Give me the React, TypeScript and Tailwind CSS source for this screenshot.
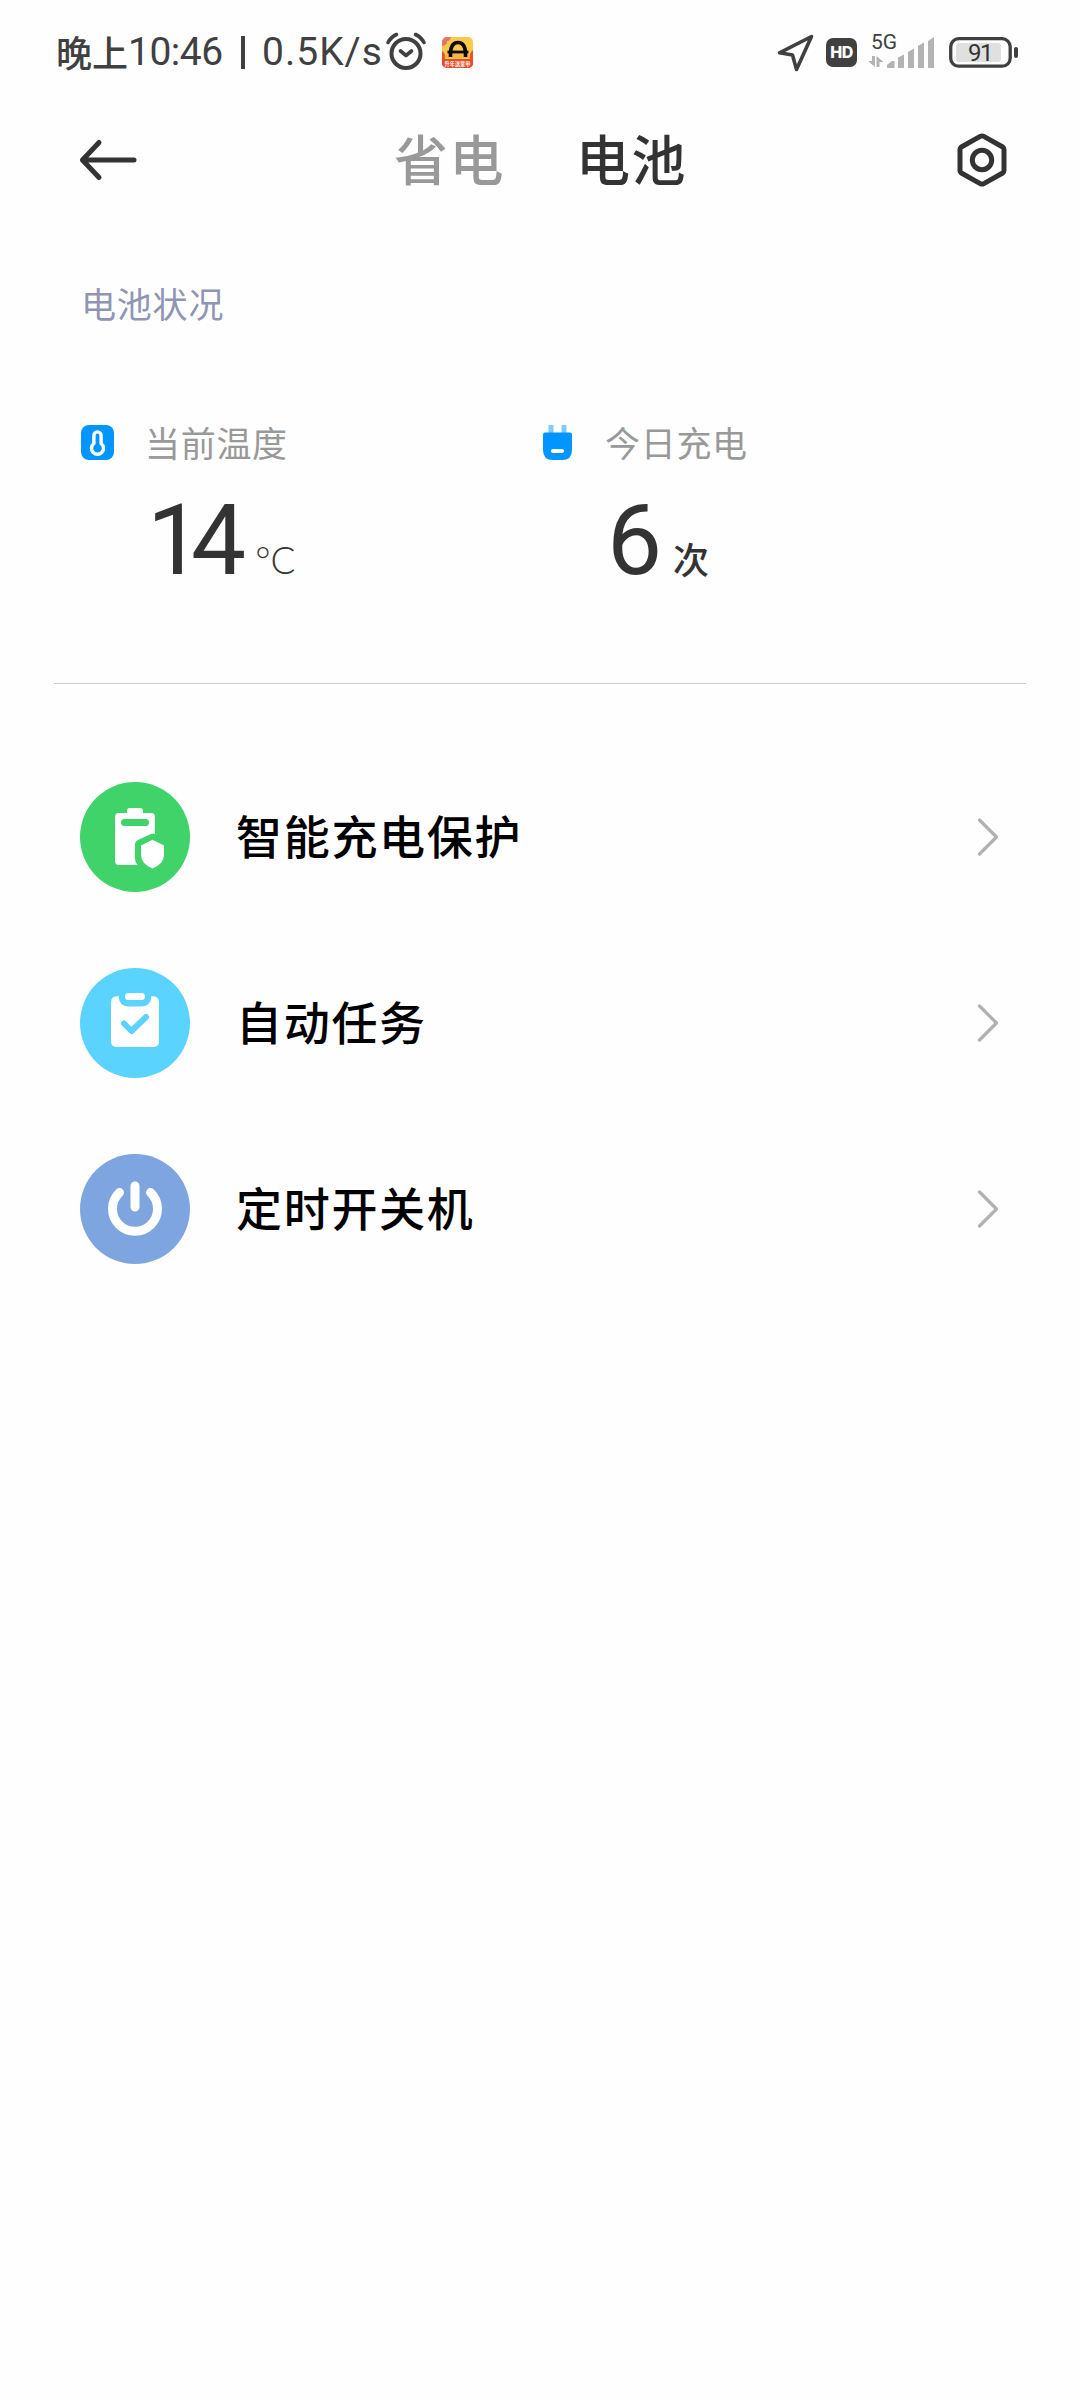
import type { ReactNode } from 'react'

function AlarmIcon() {
  return (
    <svg width="42" height="40" viewBox="0 0 42 40" fill="none" stroke="#404040" strokeLinecap="round">
      <circle cx="21" cy="21.500" r="14.500" strokeWidth="4" />
      <path d="M3 10.500 Q6 5 11.500 2.500 M30.500 2.500 Q36 5 39 10.500" strokeWidth="3.600" />
      <path d="M15.500 19 L21 23.500 L26.500 19" strokeWidth="3.600" strokeLinejoin="round" />
    </svg>
  )
}

function AppBadge() {
  return (
    <svg width="31" height="31" viewBox="0 0 31 31">
      <rect width="31" height="31" rx="5" fill="#fbc84c" />
      <path d="M0 5 a5 5 0 0 1 5 -5 h4 q-1 4 -4 4 q1 4 -5 5 z" fill="#e0766a" />
      <path d="M0 14 q4 2 3 8 h25 q-1 -6 3 -9 v13 a5 5 0 0 1 -5 5 h-21 a5 5 0 0 1 -5 -5 z" fill="#f0502a" />
      <path d="M3.500 21 q0 -5 4 -5 h16 q4 0 4.500 5 z" fill="#fbb545" />
      <path d="M0 22 h31 v4 a5 5 0 0 1 -5 5 h-21 a5 5 0 0 1 -5 -5 z" fill="#ea4a26" />
      <path d="M8.500 20 V16 Q9 5.500 16 5.500 Q23 5.500 23.500 16 V20" fill="none" stroke="#0c0a08" strokeWidth="3.600" />
      <path d="M5.500 15 H26.500" stroke="#0c0a08" strokeWidth="2.800" />
      <text x="15.500" y="28.500" textAnchor="middle" fontSize="5.200" fontWeight="700" fill="#fff" className="font-['Noto_Sans_CJK_SC',sans-serif]">
        升年送皇甲
      </text>
    </svg>
  )
}

function LocationIcon() {
  return (
    <svg width="40" height="40" viewBox="0 0 40 40" fill="none" stroke="#404040" strokeWidth="3.600" strokeLinejoin="round">
      <path d="M35.500 4.500 L3.500 20.800 L16.500 23 L20.500 37.500 Z" />
    </svg>
  )
}

function HdIcon() {
  return (
    <div className="flex h-[29px] w-[31px] items-center justify-center rounded-[7px] bg-[#404040] font-['Inter',sans-serif] text-[16px] leading-none font-extrabold tracking-[-0.500px] text-white">
      HD
    </div>
  )
}

function SignalIcon() {
  return (
    <svg width="70" height="56" viewBox="0 -10 70 56" fill="#b3b3b3">
      <text x="4" y="15" fontSize="21" fill="#404040" className="font-['Roboto',sans-serif]">
        5G
      </text>
      <path d="M5 22 h3 v11 l-7 -6 h4 z M9.500 33 v-11 l7 6 h-4 v5 z" />
      <path d="M20 34 v-3 l5 -4 h2.500 v7 z" />
      <path d="M31 34 v-10.500 l6 -3 v13.500 z" />
      <path d="M41 34 v-16 l6 -3.500 v19.500 z" />
      <path d="M51 34 v-22 l6 -3.500 v25.500 z" />
      <path d="M61 34 v-27 l6 -4 v31 z" />
    </svg>
  )
}

function BatteryIcon() {
  return (
    <svg width="70" height="31" viewBox="0 0 70 31">
      <rect x="1.700" y="1.700" width="59.500" height="27.500" rx="8" fill="none" stroke="#404040" strokeWidth="3.300" />
      <rect x="7" y="6" width="45" height="19" rx="3" fill="#e0e0e0" />
      <rect x="65" y="10" width="4" height="11" rx="2" fill="#404040" />
      <text x="31" y="24" textAnchor="middle" fontSize="24" fill="#333" letterSpacing="-1.500" className="font-['Roboto',sans-serif]">
        91
      </text>
    </svg>
  )
}

function BackIcon() {
  return (
    <svg width="58" height="48" viewBox="0 0 58 48" fill="none" stroke="#333" strokeWidth="5" strokeLinecap="round" strokeLinejoin="round">
      <path d="M20 6.500 L3.500 24 L20 41.500 M3.500 24 H55" />
    </svg>
  )
}

function SettingsIcon() {
  return (
    <svg width="50" height="54" viewBox="0 0 50 54" fill="none" stroke="#333" strokeWidth="5" strokeLinejoin="round">
      <path d="M23.200 3.400 Q25 2.400 26.800 3.400 L45.700 14 Q47 15 47 16.500 V37.500 Q47 39 45.700 40 L26.800 50.600 Q25 51.600 23.200 50.600 L4.300 40 Q3 39 3 37.500 V16.500 Q3 15 4.300 14 Z" />
      <circle cx="25" cy="27" r="9.700" />
    </svg>
  )
}

function ThermometerIcon() {
  return (
    <svg width="33" height="35" viewBox="0 0 33 35">
      <rect width="33" height="35" rx="8" fill="#0095ff" />
      <path d="M12.900 18.500 V10.500 a3.600 3.600 0 0 1 7.200 0 V18.500 a6 6 0 1 1 -7.200 0 z" fill="none" stroke="#fff" strokeWidth="3.400" />
    </svg>
  )
}

function PlugIcon() {
  return (
    <svg width="33" height="35" viewBox="0 0 33 35">
      <path d="M7.500 0 h5 v9 h-5 z M20.500 0 h5 v9 h-5 z" fill="#80caff" />
      <path d="M4 7.500 h25 a2 2 0 0 1 2 2 V25 q0 10 -10 10 h-9 q-10 0 -10 -10 V9.500 a2 2 0 0 1 2 -2 z" fill="#0095ff" />
      <rect x="10" y="24" width="13" height="4" rx="2" fill="#fff" />
    </svg>
  )
}

function ChargeProtectIcon() {
  return (
    <svg width="110" height="110" viewBox="0 0 110 110">
      <circle cx="55" cy="55" r="55" fill="#40d36a" />
      <path d="M39 31 h8 v-2 a3 3 0 0 1 3 -3 h10 a3 3 0 0 1 3 3 v2 h8 a4 4 0 0 1 4 4 v17 l-3 -0.500 l-14 6.500 q-3 1.500 -3 4 v14 q0 5 3 7 h-19 a4 4 0 0 1 -4 -4 v-44 a4 4 0 0 1 4 -4 z" fill="#fff" />
      <rect x="41" y="37" width="28" height="7" rx="3.500" fill="#40d36a" />
      <path d="M72.500 57.800 L84 63.500 V73 Q84 81.500 72.500 86.500 Q61 81.500 61 73 V63.500 Z" fill="#fff" />
    </svg>
  )
}

function TaskIcon() {
  return (
    <svg width="110" height="110" viewBox="0 0 110 110">
      <circle cx="55" cy="55" r="55" fill="#5ad3ff" />
      <path d="M38.500 28 Q39.500 38.500 48 38.500 H62 Q70.500 38.500 71.500 28 Q79 28 79 34 V74 a5 5 0 0 1 -5 5 H36 a5 5 0 0 1 -5 -5 V34 Q31 28 38.500 28 z" fill="#fff" />
      <rect x="45" y="25" width="20" height="7" rx="3.500" fill="#fff" />
      <path d="M44 55.500 L51.500 63 L66 49" fill="none" stroke="#5ad3ff" strokeWidth="6" strokeLinecap="round" strokeLinejoin="round" />
    </svg>
  )
}

function PowerIcon() {
  return (
    <svg width="110" height="110" viewBox="0 0 110 110" fill="none" stroke="#fff" strokeWidth="9" strokeLinecap="round">
      <circle cx="55" cy="55" r="55" fill="#7ea5df" stroke="none" />
      <path d="M39.500 38.500 A22.500 22.500 0 1 0 70.500 38.500 M55 32 V53" />
    </svg>
  )
}

function ChevronIcon() {
  return (
    <svg width="22" height="40" viewBox="0 0 22 40" fill="none" stroke="#b2b2b2" strokeWidth="3.300" strokeLinecap="round" strokeLinejoin="round">
      <path d="M2.500 3 L19.500 20 L2.500 37" />
    </svg>
  )
}

type StatProps = { icon: ReactNode; label: string; value: string; unit: ReactNode }

function Stat({ icon, label, value, unit }: StatProps) {
  return (
    <div className="w-[460px]">
      <div className="flex h-[50px] items-center gap-[31px]">
        {icon}
        <span className="text-[35px] leading-[50px] tracking-[0.700px] text-[#999]">{label}</span>
      </div>
      <div className="flex h-[120px] items-baseline pl-[66px] text-[#333]">
        <span className="font-['Roboto',sans-serif] text-[98px] leading-[148px] tracking-[-11px]">{value}</span>
        {unit}
      </div>
    </div>
  )
}

const items = [
  { label: '智能充电保护', icon: <ChargeProtectIcon /> },
  { label: '自动任务', icon: <TaskIcon /> },
  { label: '定时开关机', icon: <PowerIcon /> },
]

export default function App() {
  return (
    <div className="h-[2400px] w-[1080px] overflow-hidden bg-[#fefefe] font-['Noto_Sans_CJK_SC',sans-serif]">
      {/* Status bar */}
      <div className="flex h-[104px] items-center justify-between pr-[61px] pl-[56px]">
        <div className="flex items-center text-[#404040]">
          <span className="pb-[3px] text-[36px] leading-[50px] font-medium">晚上</span>
          <span className="w-[113px] font-['Roboto',sans-serif] text-[39px] leading-[50px] tracking-[-0.500px]">10:46</span>
          <span className="mr-[17px] h-[33px] w-[4px] bg-[#404040]" />
          <span className="w-[123px] font-['Roboto',sans-serif] text-[39px] leading-[50px] tracking-[1px]">0.5K/s</span>
          <AlarmIcon />
          <span className="ml-[15px]">
            <AppBadge />
          </span>
        </div>
        <div className="flex items-center">
          <LocationIcon />
          <span className="ml-[10px]">
            <HdIcon />
          </span>
          <span className="ml-[10px]">
            <SignalIcon />
          </span>
          <span className="ml-[12px]">
            <BatteryIcon />
          </span>
        </div>
      </div>

      {/* Header tabs */}
      <div className="flex h-[112px] items-center pr-[73px] pl-[79px]">
        <BackIcon />
        <div className="flex flex-1 gap-[71px] pb-[4px] pl-[257px] text-[54px] leading-[80px] font-medium tracking-[1.500px]">
          <button type="button" className="text-[#999]">省电</button>
          <button type="button" className="text-[#333]">电池</button>
        </div>
        <SettingsIcon />
      </div>

      <h2 className="mt-[62px] pl-[81px] text-[35px] leading-[50px] tracking-[0.800px] text-[#9095b3]">电池状况</h2>

      <div className="mt-[89px] flex h-[266px] pl-[81px]">
        <Stat
          icon={<ThermometerIcon />}
          label="当前温度"
          value="14"
          unit={<span className="ml-[20px] font-['Lato',sans-serif] text-[37px] font-light">°C</span>}
        />
        <Stat
          icon={<PlugIcon />}
          label="今日充电"
          value="6"
          unit={<span className="ml-[22px] text-[36px] font-medium">次</span>}
        />
      </div>
      <div className="mx-[54px] h-px bg-[#ccc]" />

      <ul className="pt-[60px]">
        {items.map((item) => (
          <li key={item.label} className="flex h-[186px] items-center pr-[81px] pl-[80px]">
            {item.icon}
            <span className="ml-[46px] flex-1 pb-[6px] text-[46px] leading-[66px] font-medium tracking-[1.700px] text-black">{item.label}</span>
            <ChevronIcon />
          </li>
        ))}
      </ul>
    </div>
  )
}
